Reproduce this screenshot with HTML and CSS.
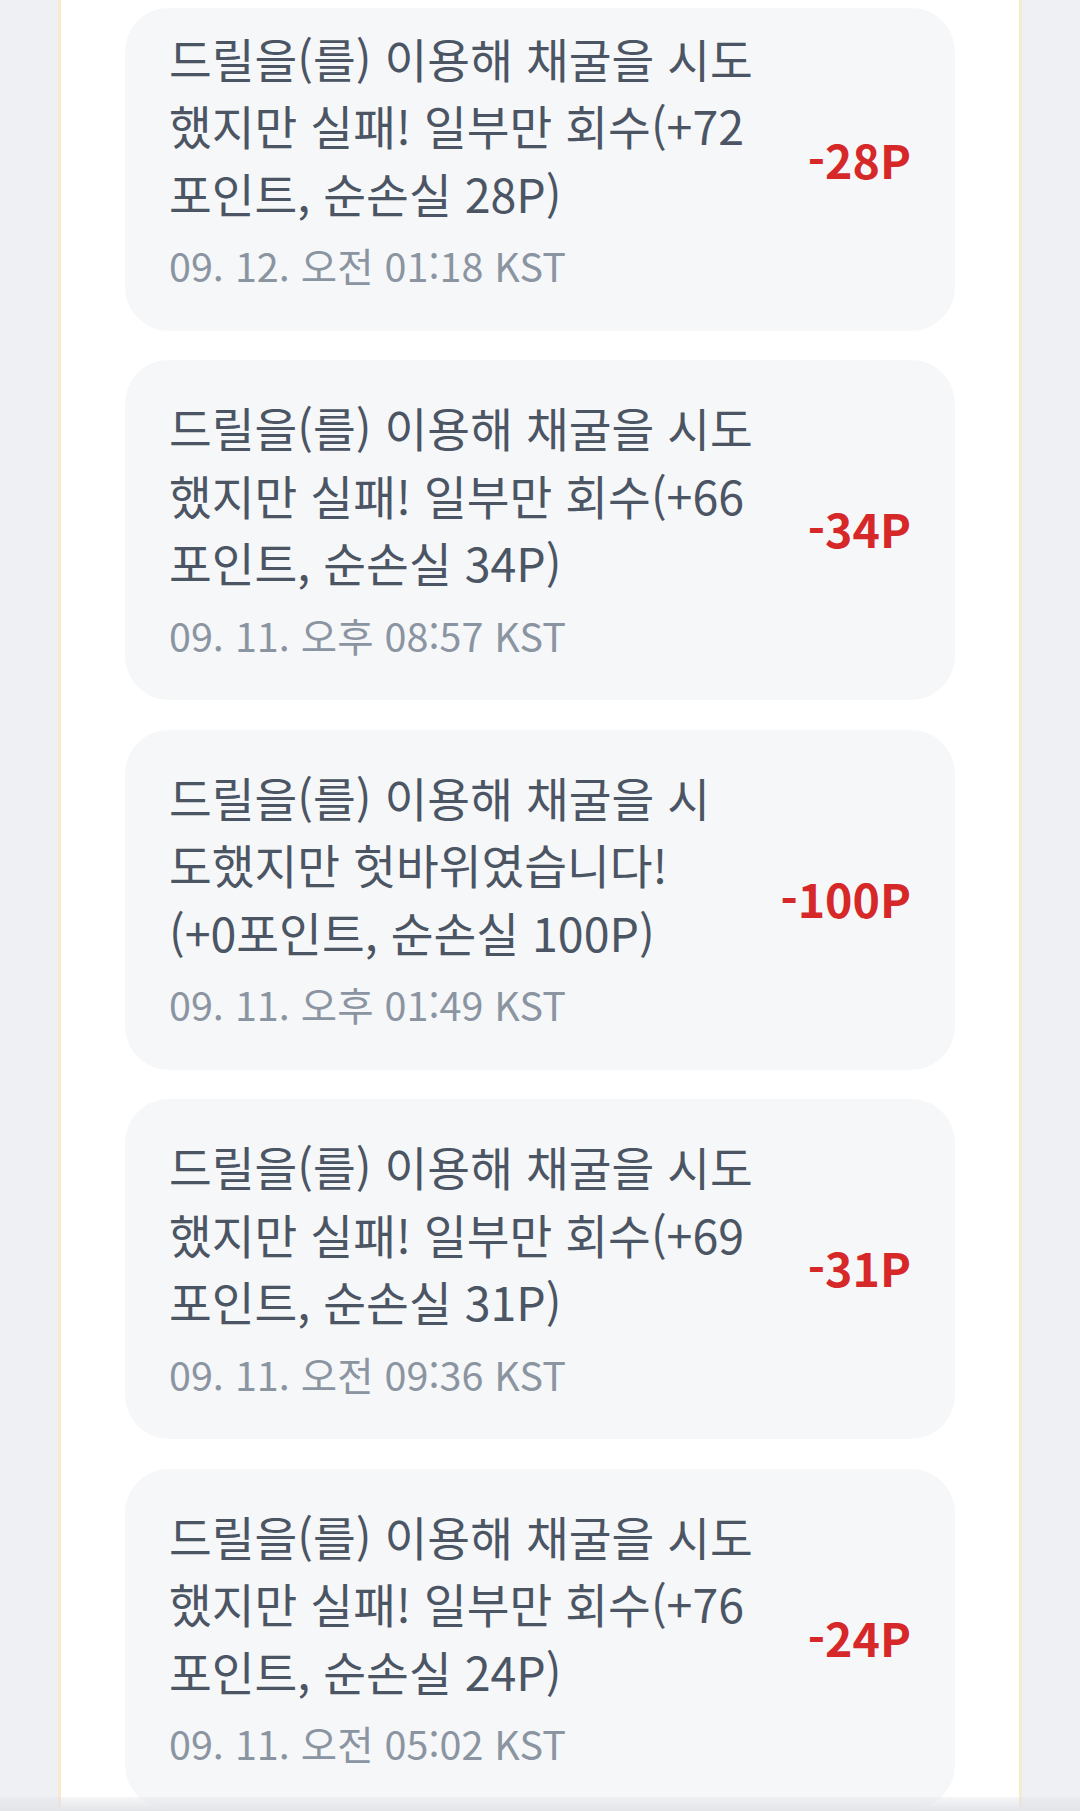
FILE: index.html
```html
<!DOCTYPE html>
<html lang="ko">
<head>
    <meta charset="UTF-8">
    <title>포인트 내역</title>
    <link rel="stylesheet" href="styles.css">
</head>
<body>
<div class="wrap">
    <ul class="list">
        <li class="item">
            <div class="info">
                <p class="msg">드릴을(를) 이용해 채굴을 시도했지만 실패! 일부만 회수(+72포인트, 순손실 28P)</p>
                <p class="time">09. 12. 오전 01:18 KST</p>
            </div>
            <span class="amount">-28P</span>
        </li>
        <li class="item">
            <div class="info">
                <p class="msg">드릴을(를) 이용해 채굴을 시도했지만 실패! 일부만 회수(+66포인트, 순손실 34P)</p>
                <p class="time">09. 11. 오후 08:57 KST</p>
            </div>
            <span class="amount">-34P</span>
        </li>
        <li class="item">
            <div class="info">
                <p class="msg">드릴을(를) 이용해 채굴을 시도했지만 헛바위였습니다! (+0포인트, 순손실 100P)</p>
                <p class="time">09. 11. 오후 01:49 KST</p>
            </div>
            <span class="amount">-100P</span>
        </li>
        <li class="item">
            <div class="info">
                <p class="msg">드릴을(를) 이용해 채굴을 시도했지만 실패! 일부만 회수(+69포인트, 순손실 31P)</p>
                <p class="time">09. 11. 오전 09:36 KST</p>
            </div>
            <span class="amount">-31P</span>
        </li>
        <li class="item">
            <div class="info">
                <p class="msg">드릴을(를) 이용해 채굴을 시도했지만 실패! 일부만 회수(+76포인트, 순손실 24P)</p>
                <p class="time">09. 11. 오전 05:02 KST</p>
            </div>
            <span class="amount">-24P</span>
        </li>
    </ul>
</div>
<div class="bottom-shade"></div>
</body>
</html>
```

FILE: styles.css
```css
* {
    margin: 0;
    padding: 0;
    list-style: none;
    box-sizing: border-box;
}
html, body {
    height: 100%;
}
body {
    background: #eef0f4;
    font-family: "Noto Sans CJK KR", "Noto Sans", sans-serif;
    overflow: hidden;
}
/* 가운데 흰 영역 */
.wrap {
    width: 964px;
    min-height: 100%;
    margin: 0 auto;
    background: #fff;
    border-left: 3px solid #f6ead0;
    border-right: 3px solid #f6ead0;
    padding: 8px 64px 0;
}
.list {
    display: flex;
    flex-direction: column;
    gap: 29.5px;
}
.item {
    display: flex;
    align-items: center;
    gap: 44px;
    background: #f6f7f9;
    border-radius: 44px;
    padding: 33px 44px 37.5px;
}
/* 맨 위 카드는 스크롤로 위쪽이 조금 잘려 있음 */
.item:first-child {
    padding-top: 15.5px;
}
.info {
    flex: 1;
    min-width: 0;
}
.msg {
    font-size: 46.5px;
    line-height: 67.5px;
    color: #4b5563;
}
.time {
    margin-top: 10px;
    font-size: 39.5px;
    line-height: 57px;
    color: #8b95a1;
}
.amount {
    flex-shrink: 0;
    font-size: 46.5px;
    font-weight: 700;
    color: #d62828;
}
.bottom-shade {
    position: fixed;
    left: 0;
    right: 0;
    bottom: 0;
    height: 14px;
    background: linear-gradient(to bottom, rgba(225, 226, 230, 0.3), #e3e4e8);
}
```
